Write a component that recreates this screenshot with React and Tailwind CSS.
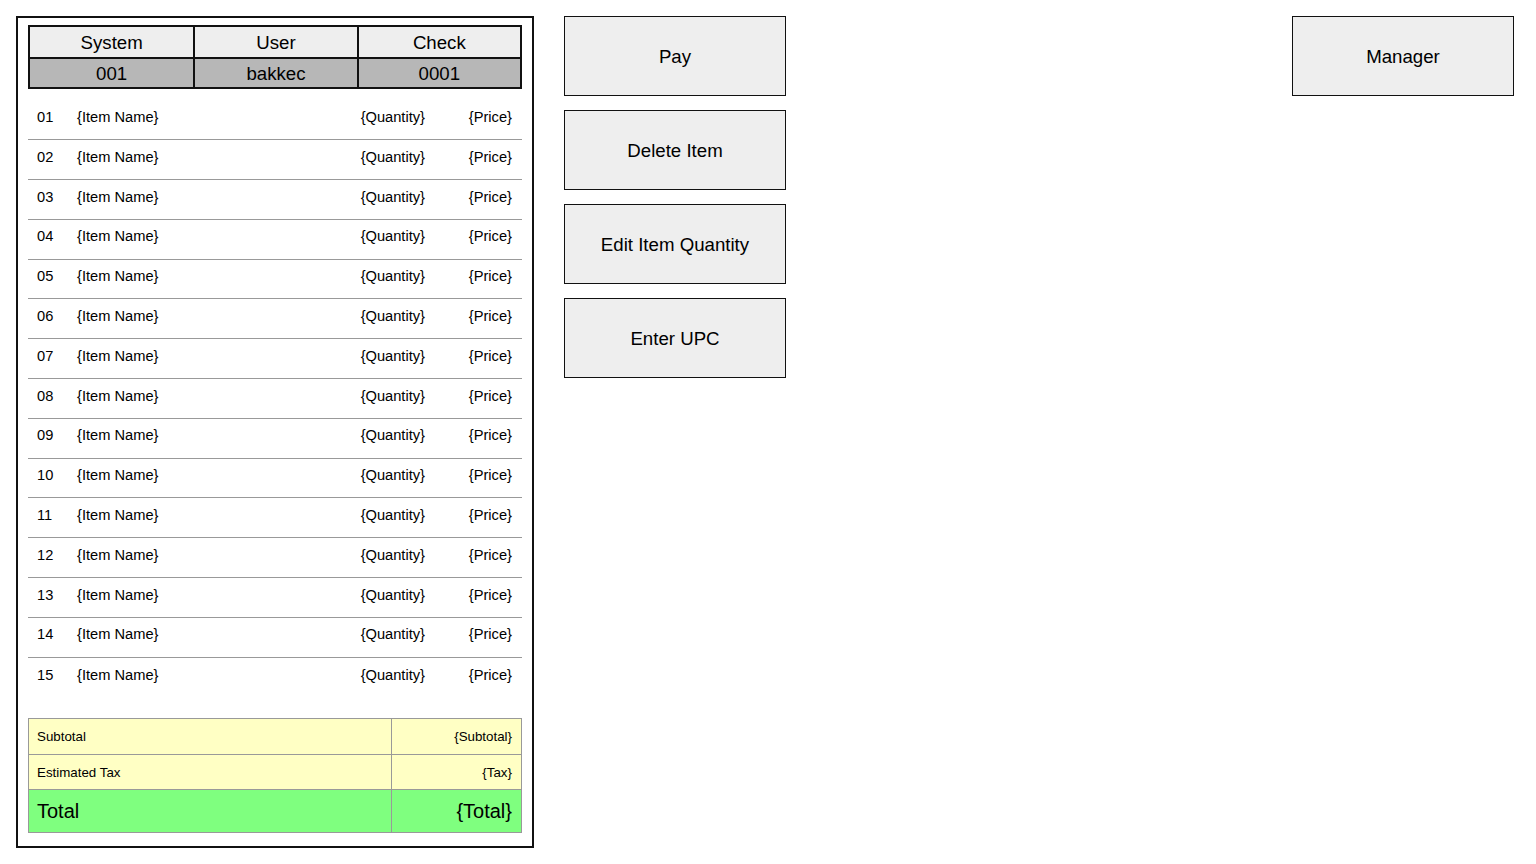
import React from "react";

const items = Array.from({ length: 15 }, (_, i) => String(i + 1).padStart(2, "0"));

const buttons = ["Pay", "Delete Item", "Edit Item Quantity", "Enter UPC"];

const App = () => {
  return (
    <div className="flex w-[1536px] h-[864px] bg-white pl-4 pt-4 font-['Liberation_Sans',Arial,sans-serif] text-black">
      {/* receipt panel */}
      <div className="w-[518px] h-[832px] border-2 border-[#111] pt-[7px] pl-[10px] pr-[10px] flex flex-col">
        {/* header table */}
        <div className="grid grid-cols-3 border-2 border-[#111] text-[18.67px] leading-none">
          <div className="h-[30px] pt-[2px] bg-[#eeeeee] flex items-center justify-center">System</div>
          <div className="h-[30px] pt-[2px] bg-[#eeeeee] border-l-2 border-[#111] flex items-center justify-center">User</div>
          <div className="h-[30px] pt-[2px] bg-[#eeeeee] border-l-2 border-[#111] flex items-center justify-center">Check</div>
          <div className="h-[30px] pt-[2px] bg-[#b7b7b7] border-t-2 border-[#111] flex items-center justify-center">001</div>
          <div className="h-[30px] pt-[2px] bg-[#b7b7b7] border-t-2 border-l-2 border-[#111] flex items-center justify-center">bakkec</div>
          <div className="h-[30px] pt-[2px] bg-[#b7b7b7] border-t-2 border-l-2 border-[#111] flex items-center justify-center">0001</div>
        </div>

        {/* item rows */}
        <div className="mt-[11.5px] flex flex-col">
          {items.map((n, i) => (
            <div
              key={n}
              className={`h-[39.8px] flex items-center pb-[5px] text-[14.67px] leading-none ${
                i < items.length - 1 ? "border-b border-[#999999]" : ""
              }`}
            >
              <span className="w-[40px] pl-[9px]">{n}</span>
              <span className="ml-[9px] flex-1">{"{Item Name}"}</span>
              <span className="w-[100px] text-right">{"{Quantity}"}</span>
              <span className="w-[97px] text-right pr-[10px]">{"{Price}"}</span>
            </div>
          ))}
        </div>

        {/* totals */}
        <div className="mt-[21px] grid grid-cols-[362px_1fr] border border-[#999999] leading-none">
          <div className="h-[35px] bg-[#ffffc4] flex items-center pl-[8px] text-[13.33px]">Subtotal</div>
          <div className="h-[35px] bg-[#ffffc4] border-l border-[#999999] flex items-center justify-end pr-[9px] text-[13.33px]">{"{Subtotal}"}</div>
          <div className="h-[35px] bg-[#ffffc4] border-t border-[#999999] flex items-center pl-[8px] text-[13.33px]">Estimated Tax</div>
          <div className="h-[35px] bg-[#ffffc4] border-t border-l border-[#999999] flex items-center justify-end pr-[9px] text-[13.33px]">{"{Tax}"}</div>
          <div className="h-[43px] bg-[#7fff7f] border-t border-[#999999] flex items-center pl-[8px] text-[20px]">Total</div>
          <div className="h-[43px] bg-[#7fff7f] border-t border-l border-[#999999] flex items-center justify-end pr-[9px] text-[20px]">{"{Total}"}</div>
        </div>
      </div>

      {/* action buttons */}
      <div className="ml-[30px] flex flex-col gap-[14px]">
        {buttons.map((b) => (
          <button
            key={b}
            className="w-[222px] h-[80px] pt-[2px] bg-[#eeeeee] border border-[#111] text-[18.67px] leading-none flex items-center justify-center"
          >
            {b}
          </button>
        ))}
      </div>

      <div className="ml-auto mr-[22px]">
        <button className="w-[222px] h-[80px] pt-[2px] bg-[#eeeeee] border border-[#111] text-[18.67px] leading-none flex items-center justify-center">
          Manager
        </button>
      </div>
    </div>
  );
};

export default App;
